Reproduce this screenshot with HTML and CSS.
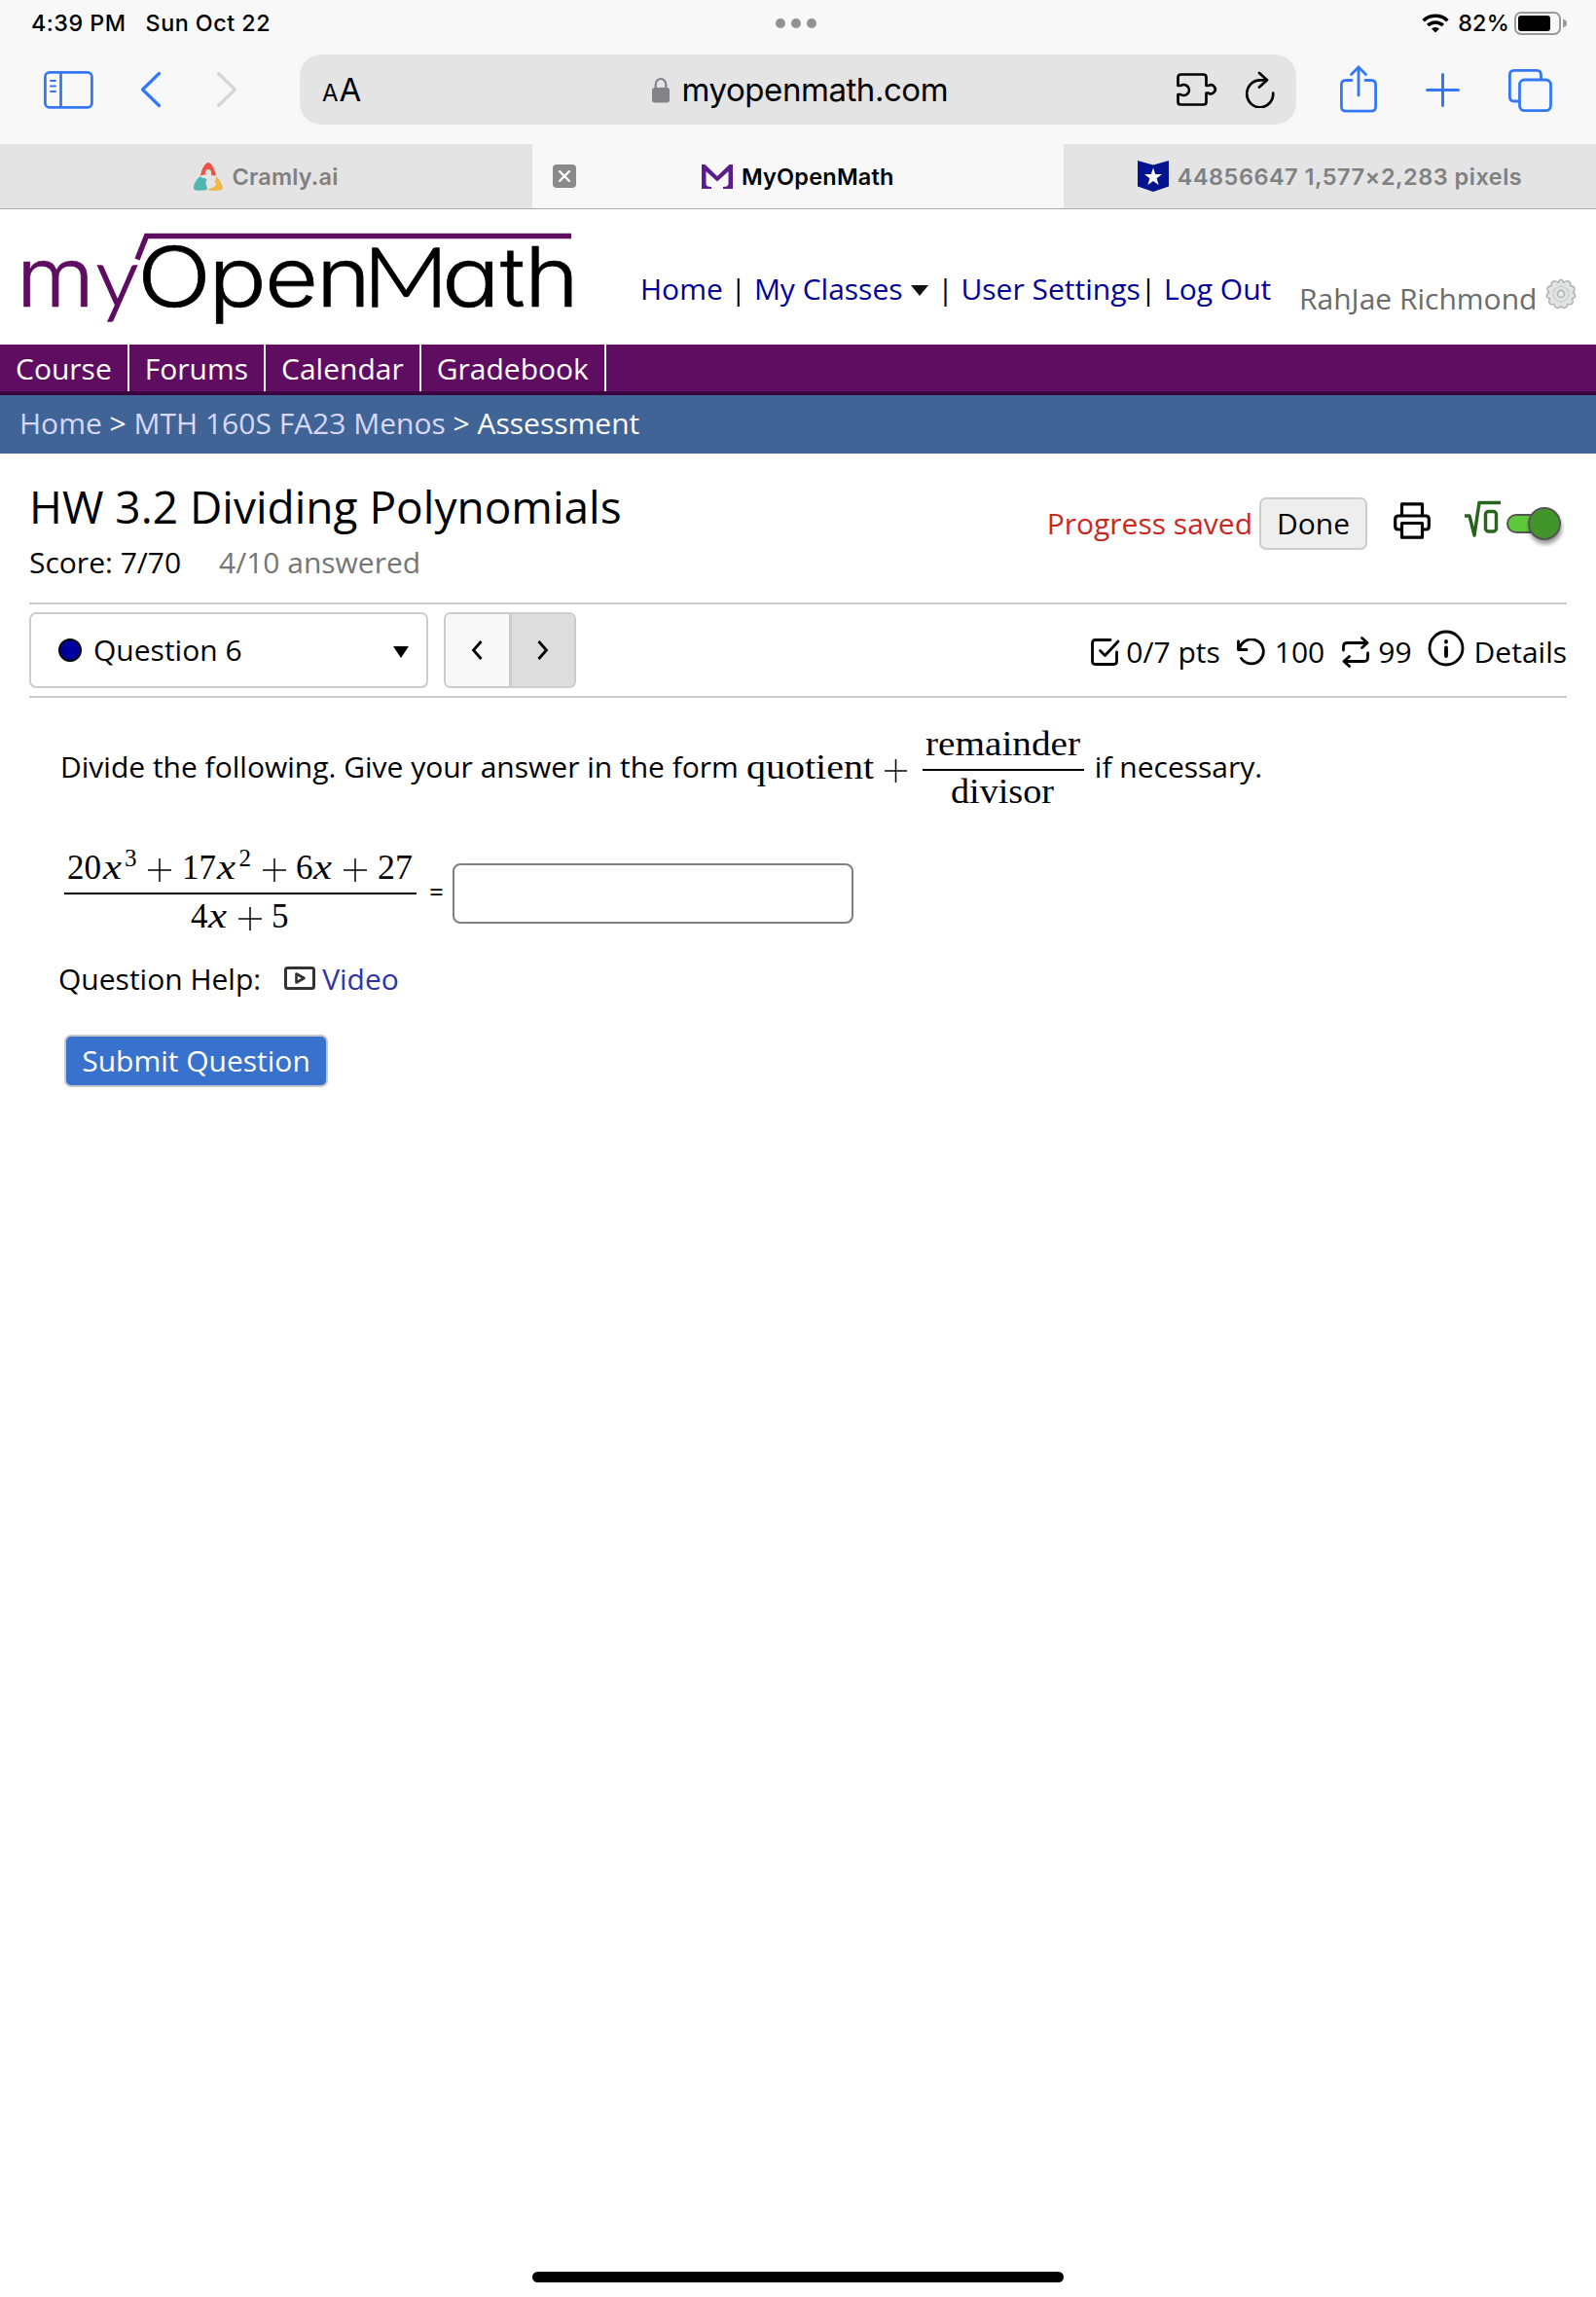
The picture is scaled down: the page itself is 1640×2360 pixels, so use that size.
FILE: index.html
```html
<!DOCTYPE html>
<html lang="en">
<head>
    <meta charset="UTF-8">
    <meta name="viewport" content="width=device-width, initial-scale=1.0">
    <title>MyOpenMath</title>
    <link rel="stylesheet" href="styles.css">
</head>
<body>
    <div class="browser">
        <div class="status-bar">
            <span class="time">4:39 PM</span>
            <span class="date">Sun Oct 22</span>
            <div class="dots"><i></i><i></i><i></i></div>
            <svg class="wifi" width="28" height="20" viewBox="0 0 28 20">
                <path d="M1.6 7.2a18 18 0 0 1 24.8 0M6.2 12a11.5 11.5 0 0 1 15.6 0" fill="none" stroke="#000" stroke-width="3.6"/>
                <path d="M14 19.6l-4-4a6 6 0 0 1 8 0z"/>
            </svg>
            <span class="percent">82%</span>
            <svg class="battery" width="54" height="24" viewBox="0 0 54 24">
                <rect x="1" y="1" width="46" height="22" rx="6" fill="none" stroke="#9a9a9a" stroke-width="2"/>
                <rect x="4" y="4" width="33" height="16" rx="3"/>
                <path d="M50 8a4 4 0 0 1 0 8z" fill="#9a9a9a"/>
            </svg>
        </div>

        <div class="toolbar">
            <svg class="sidebar-icon" width="51" height="39" viewBox="0 0 51 39">
                <g fill="none" stroke="#3478f6" stroke-width="2.8">
                    <rect x="1.4" y="1.4" width="48" height="36" rx="4.5"/>
                    <path d="M17.5 1v37"/>
                    <path d="M7 10h5M7 15.5h5M7 21h5" stroke-width="2" stroke-linecap="round"/>
                </g>
            </svg>
            <svg class="back" width="22" height="38" viewBox="0 0 22 38">
                <path d="M19.5 2.5L2.5 19l17 16.5" fill="none" stroke="#3478f6" stroke-width="3.2" stroke-linecap="round" stroke-linejoin="round"/>
            </svg>
            <svg class="forward" width="22" height="38" viewBox="0 0 22 38">
                <path d="M2.5 2.5L19.5 19l-17 16.5" fill="none" stroke="#d6d6d6" stroke-width="3.2" stroke-linecap="round" stroke-linejoin="round"/>
            </svg>
            <div class="url-bar">
                <span class="reader"><small>A</small>A</span>
                <svg class="lock" width="18" height="27" viewBox="0 0 18 27">
                    <path d="M3.7 12V8a5.3 6 0 0 1 10.6 0v4" fill="none" stroke="#828287" stroke-width="2.2"/>
                    <rect y="11" width="18" height="15.5" rx="3" fill="#828287"/>
                </svg>
                <span class="url">myopenmath.com</span>
                <svg class="puzzle" width="42" height="34" viewBox="0 0 42 34">
                    <path d="M1.5 12V4.5q0-3 3-3h23q3 0 3 3V13h2.200a4.5 4.5 0 1 1 0 7.500h-2.200V30q0 2.500-3 2.500h-23q-3 0-3-2.500v-8h2.700a5.5 5.5 0 1 0 0-9H1.500z" fill="none" stroke="#000" stroke-width="2.7" stroke-linejoin="round"/>
                </svg>
                <svg class="reload" width="31" height="38" viewBox="0 0 31 38">
                    <path d="M23 9.300H16A13.500 14 0 1 0 29.200 22.500M15 2l8 7.300-8 7.200" fill="none" stroke="#000" stroke-width="2.7" stroke-linecap="round" stroke-linejoin="round"/>
                </svg>
            </div>
            <svg class="share" width="38" height="49" viewBox="0 0 38 49">
                <path d="M12 15.5H6q-4.600 0-4.600 4.600v22.500q0 4.600 4.600 4.600h26q4.600 0 4.600-4.600V20.100q0-4.600-4.600-4.600h-6M19 31V2.500M11.500 9.500l7.500-7.500 7.500 7.500" fill="none" stroke="#3478f6" stroke-width="2.8" stroke-linecap="round"/>
            </svg>
            <svg class="plus" width="35" height="35" viewBox="0 0 35 35">
                <path d="M17.5 1.5v32M1.5 17.5h32" fill="none" stroke="#3478f6" stroke-width="3" stroke-linecap="round"/>
            </svg>
            <svg class="tabs-icon" width="45" height="44" viewBox="0 0 45 44">
                <g fill="none" stroke="#3478f6" stroke-width="2.8">
                    <rect x="11.5" y="11" width="32" height="31.6" rx="5"/>
                    <path d="M33.5 11V6q0-4.600-4.600-4.600H6q-4.600 0-4.600 4.600v22.500q0 4.500 4.600 4.500h5.500"/>
                </g>
            </svg>
        </div>

        <div class="tabs">
            <div class="tab">
                <svg width="30" height="29" viewBox="0 0 30 29">
                    <path d="M7 13.500C8 7 12 0 15 0s6.500 6 8 13.500l-5-.5c1-4-1-6-3-6s-4 2-2.500 5z" fill="#ec5447"/>
                    <path d="M7 14c2 3 4 1 6 3 1 2-1 3-.5 5s2 4 1 6C6 29.500 0 29 0 26c0-4 3-9 7-12z" fill="#50b5b1"/>
                    <path d="M23 14c4 4 7 9 7 12 0 3-8 3.500-15 2.500 0-2 3-2 5-3 4-2 4-5 1-6 2-1 2-4 2-5.500z" fill="#f0b849"/>
                </svg>
                <span class="cramly">Cramly.ai</span>
            </div>
            <div class="tab active">
                <svg class="close" width="24" height="24" viewBox="0 0 24 24">
                    <rect width="24" height="24" rx="4" fill="#8a8a8a"/>
                    <path d="M7 7l10 10M17 7L7 17" stroke="#fff" stroke-width="2.4" stroke-linecap="round"/>
                </svg>
                <svg width="32" height="25" viewBox="0 0 32 25">
                    <path d="M0 0h3.500L16 12 28.500 0H32v25H22v-2q5.500 0 5.500-3V7L16 17.500 4.500 7v13q0 3 5.500 3v2H0z" fill="#5b1d8c"/>
                </svg>
                <span class="mom">MyOpenMath</span>
            </div>
            <div class="tab">
                <svg width="32" height="32" viewBox="0 0 32 32">
                    <path d="M0 0l16 4.500L32 0v26.500L16 32 0 26.500z" fill="#04148f"/>
                    <path d="M16 7.500l2.200 6.500h6.800l-5.400 4.200 2 6.800-5.600-4.100-5.600 4.100 2-6.800L7 14h6.800z" fill="#fff"/>
                </svg>
                <span class="pixels">44856647 1,577×2,283 pixels</span>
            </div>
        </div>
    </div>

    <header class="header">
        <svg class="logo" width="583" height="110" viewBox="-13 0 583 110">
            <path d="M118 36.500L127.500 12.500H564" fill="none" stroke="#5e0d61" stroke-width="5.500"/>
            <g class="logo-text">
                <g class="my">
                    <text x="-6" y="85" textLength="80" lengthAdjust="spacingAndGlyphs">m</text>
                    <text class="lato" x="76" y="85" textLength="43" lengthAdjust="spacingAndGlyphs">y</text>
                </g>
                <text x="118" y="85" textLength="76" lengthAdjust="spacingAndGlyphs">O</text>
                <text x="191" y="85" textLength="60" lengthAdjust="spacingAndGlyphs">p</text>
                <text x="249" y="85" textLength="55" lengthAdjust="spacingAndGlyphs">e</text>
                <text x="302" y="85" textLength="56" lengthAdjust="spacingAndGlyphs">n</text>
                <text class="lato" x="350" y="85" textLength="88" lengthAdjust="spacingAndGlyphs">M</text>
                <text x="431" y="85" textLength="60" lengthAdjust="spacingAndGlyphs">a</text>
                <text x="491" y="85">t</text>
                <text x="516" y="85" textLength="56" lengthAdjust="spacingAndGlyphs">h</text>
            </g>
        </svg>
        <nav class="links">
            <a>Home</a> | <a>My Classes</a> <i class="caret"></i> | <a>User Settings</a>| <a>Log Out</a>
        </nav>
        <span class="user">RahJae Richmond</span>
        <svg class="gear" width="32" height="32" viewBox="0 0 32 32">
            <path d="M16 1.500q2 0 2.800 2.800 3-2.300 5.200-1.300t1.700 4.600q3.600.2 4.200 2.500t-1.700 4.400q2.600 1.500 2.500 3.500t-3.300 2.800q1.500 3.200.2 4.900t-4.700.8q-.8 3.200-3 3.800T16 28.500q-2 2.400-4.200 1.800t-2.700-3.800q-3.600.8-4.800-.8t.2-4.900Q1.300 20 1.300 18t2.500-3.500Q1.500 12.300 2.100 10.100t4.200-2.500Q5.800 4 8 3t5.200 1.300Q14 1.500 16 1.500z" fill="#e2e4e4" stroke="#b3b5b5" stroke-width="1.6" stroke-linejoin="round"/>
            <circle cx="16" cy="16" r="8" fill="none" stroke="#d2d4d4" stroke-width="2"/>
            <circle cx="16" cy="16" r="3.5" fill="#eee" stroke="#b5b7b7" stroke-width="1.8"/>
        </svg>
    </header>

    <nav class="course-nav">
        <a>Course</a><a>Forums</a><a>Calendar</a><a>Gradebook</a>
    </nav>
    <div class="breadcrumb"><a>Home</a> &gt; <a>MTH 160S FA23 Menos</a> &gt; Assessment</div>

    <main>
        <div class="title-row">
            <div class="title-block">
                <h1>HW 3.2 Dividing Polynomials</h1>
                <p><span class="score">Score: 7/70</span><span class="answered">4/10 answered</span></p>
            </div>
            <div class="actions">
                <span class="saved">Progress saved</span>
                <button class="done">Done</button>
                <svg class="printer" width="38" height="38" viewBox="0 0 38 38">
                    <g fill="none" stroke="#000" stroke-width="3.2" stroke-linejoin="round">
                        <path d="M8.500 14V1.800h21V14M8.500 28H5q-3.300 0-3.300-3.300v-7.400Q1.700 14 5 14h28q3.300 0 3.300 3.300v7.400Q36.300 28 33 28h-3.500"/>
                        <path d="M8.500 21.500h21v14.700h-21z"/>
                    </g>
                </svg>
                <svg class="equation" width="104" height="48" viewBox="0 0 104 48">
                    <path d="M1 16h5l5 20 5-33.500H38" fill="none" stroke="#26651a" stroke-width="3.4" stroke-linejoin="round"/>
                    <rect x="22.5" y="11.5" width="11" height="20.5" rx="3" fill="none" stroke="#26651a" stroke-width="3.4"/>
                    <rect x="45" y="15" width="50" height="18" rx="9" fill="#5ec93c" stroke="#555" stroke-width="2"/>
                    <circle class="knob" cx="83" cy="24" r="16" fill="#41952a" stroke="#555" stroke-width="2"/>
                </svg>
            </div>
        </div>

        <div class="question-bar">
            <div class="select">
                <svg width="24" height="24" viewBox="0 0 24 24"><circle cx="12" cy="12" r="11" fill="#0000a0" stroke="#000" stroke-width="2"/></svg>
                <span>Question 6</span>
                <svg class="arrow" width="16" height="12" viewBox="0 0 16 12"><path d="M0 0h16L8 12z"/></svg>
            </div>
            <div class="pager">
                <button><svg width="14" height="20" viewBox="0 0 14 20"><path d="M11.500 1L3.500 10l8 9"/></svg></button>
                <button class="next"><svg width="14" height="20" viewBox="0 0 14 20"><path d="M2.500 1l8 9-8 9"/></svg></button>
            </div>
            <div class="details">
                <svg class="i-check" width="30" height="28" viewBox="0 0 30 28"><path d="M20 1.500H4.500q-3 0-3 3v19q0 3 3 3h19q3 0 3-3V14M9.500 12.500l5 5L28 3"/></svg>
                <span class="pts">0/7 pts</span>
                <svg class="i-undo" width="30" height="28" viewBox="0 0 30 28"><path d="M1.500 3v8.500H10M2.500 11A12.500 12.500 0 1 1 4.500 20.500"/></svg>
                <span class="tries">100</span>
                <svg class="i-swap" width="28" height="32" viewBox="0 0 28 32"><path d="M1.500 14V10.500q0-4 4-4H26M20.500 1.500l5.500 5-5.500 5M26.500 17v4.500q0 4-4 4H2M7.500 20.500l-5.500 5 5.500 5"/></svg>
                <span class="regens">99</span>
                <svg class="i-info" width="38" height="38" viewBox="0 0 38 38"><circle cx="19" cy="19" r="17"/><path d="M19 18.500v8.500M19 12v.5" stroke-width="3.8"/></svg>
                <span>Details</span>
            </div>
        </div>

        <div class="question">
            <div class="prompt">
                <span>Divide the following. Give your answer in the form</span>
                <svg class="math" width="356" height="100" viewBox="0 0 356 100">
                    <text x="0" y="60" textLength="131" lengthAdjust="spacingAndGlyphs">quotient</text>
                    <path d="M142 52h23M153.500 40v24" stroke="#000" stroke-width="1.5"/>
                    <text x="184" y="36" textLength="159" lengthAdjust="spacingAndGlyphs">remainder</text>
                    <path d="M181 51h166" stroke="#000" stroke-width="2"/>
                    <text x="210" y="85" textLength="106" lengthAdjust="spacingAndGlyphs">divisor</text>
                </svg>
                <span class="tail">if necessary.</span>
            </div>
            <div class="answer">
                <svg class="math" width="364" height="100" viewBox="0 0 364 100">
                    <text x="3" y="43" textLength="35" lengthAdjust="spacingAndGlyphs">20</text>
                    <text class="var" x="40" y="43" textLength="19" lengthAdjust="spacingAndGlyphs">x</text>
                    <text class="sup" x="62" y="30">3</text>
                    <path d="M86 34h24M98 22v24" stroke="#000" stroke-width="1.5"/>
                    <text x="121" y="43" textLength="35" lengthAdjust="spacingAndGlyphs">17</text>
                    <text class="var" x="157" y="43" textLength="19" lengthAdjust="spacingAndGlyphs">x</text>
                    <text class="sup" x="179.5" y="30">2</text>
                    <path d="M204 34h24M216 22v24" stroke="#000" stroke-width="1.5"/>
                    <text x="238" y="43">6</text>
                    <text class="var" x="256" y="43" textLength="19" lengthAdjust="spacingAndGlyphs">x</text>
                    <path d="M287 34h24M299 22v24" stroke="#000" stroke-width="1.5"/>
                    <text x="322" y="43" textLength="36" lengthAdjust="spacingAndGlyphs">27</text>
                    <path d="M0 58h362" stroke="#000" stroke-width="2"/>
                    <text x="130" y="93">4</text>
                    <text class="var" x="148" y="93" textLength="19" lengthAdjust="spacingAndGlyphs">x</text>
                    <path d="M179 84h24M191 72v24" stroke="#000" stroke-width="1.5"/>
                    <text x="213" y="93">5</text>
                </svg>
                <span class="equals">=</span>
                <input type="text" class="answer-box">
            </div>
            <div class="help">
                <span>Question Help:</span>
                <svg width="32" height="24" viewBox="0 0 32 24">
                    <rect x="1.5" y="1.5" width="29" height="21" rx="2" fill="none" stroke="#333" stroke-width="3"/>
                    <path d="M12.500 7.500v9l8-4.500z" fill="none" stroke="#333" stroke-width="2.6" stroke-linejoin="round"/>
                </svg>
                <a>Video</a>
            </div>
            <button class="submit">Submit Question</button>
        </div>
    </main>
    <div class="home-indicator"></div>
</body>
</html>
```
FILE: styles.css
```css
* {
    box-sizing: border-box;
}

body {
    display: flex;
    flex-direction: column;
    height: 2360px;
    margin: 0;
    background-color: #fff;
    font-family: 'Open Sans', 'Noto Sans', sans-serif;
    font-size: 30px;
    color: #000;
    overflow: hidden;
}

svg {
    display: block;
    flex: none;
}

span,
a,
nav {
    white-space: nowrap;
}

button {
    font: inherit;
    padding: 0;
}

/* browser chrome */
.browser {
    background-color: #f8f8f8;
    border-bottom: 1px solid #acacac;
    font-family: Inter, 'Liberation Sans', sans-serif;
}

.status-bar {
    display: flex;
    align-items: center;
    height: 48px;
    padding: 0 30px 0 32px;
    font-size: 23.3px;
    font-weight: 500;
    letter-spacing: 0.5px;
}

.status-bar span {
    padding-bottom: 1px;
}

.time {
    width: 118px;
}

.date {
    width: 650px;
}

.dots {
    display: flex;
    gap: 6px;
    margin-right: 622px;
}

.dots i {
    width: 10px;
    height: 10px;
    border-radius: 50%;
    background-color: #929292;
}

.percent {
    width: 58px;
    margin-left: 9px;
    letter-spacing: 0.2px;
}

.toolbar {
    display: flex;
    align-items: center;
    height: 100px;
    padding: 0 45px 12px;
}

.sidebar-icon {
    margin-right: 48px;
}

.back {
    margin-right: 56px;
}

.forward {
    margin-right: 64px;
}

.url-bar {
    display: flex;
    align-items: center;
    width: 1024px;
    height: 72px;
    padding: 0 22px 0 23px;
    border-radius: 22px;
    background-color: #e4e4e4;
    font-size: 33px;
}

.reader {
    width: 339px;
    font-size: 33px;
}

.reader small {
    margin-right: 1px;
    font-size: 24px;
}

.lock {
    margin-right: 13px;
}

.url {
    width: 509px;
    letter-spacing: -0.45px;
}

.puzzle {
    margin-right: 28px;
}

.share {
    margin: -2px 0 0 45px;
}

.plus {
    margin: 1px 50px 0;
}

.tabs-icon {
    margin-top: 1px;
}

.tabs {
    display: grid;
    grid-template-columns: 547px 546px 547px;
    height: 66px;
    font-size: 23.5px;
    font-weight: 600;
    color: #808080;
}

.tab {
    display: flex;
    align-items: center;
    justify-content: center;
    gap: 9px;
    background-color: #e4e4e4;
}

.tab.active {
    justify-content: flex-start;
    padding-left: 21px;
    background-color: #f8f8f8;
    color: #000;
}

.close {
    margin-right: 120px;
}

.cramly {
    letter-spacing: 0.2px;
}

.mom {
    letter-spacing: 0.2px;
}

.pixels {
    letter-spacing: 0.5px;
}

/* page header */
.header {
    display: flex;
    height: 139px;
    padding: 15px 20px 0 10px;
}

.logo-text {
    stroke: #000;
    stroke-width: 0.7;
    font-family: Inter, sans-serif;
    font-size: 85px;
    font-weight: 300;
    font-feature-settings: 'cv11';
}

.my {
    fill: #5e0d61;
    stroke: #5e0d61;
}

.lato {
    stroke-width: 1.6;
    font-family: Lato, sans-serif;
    font-weight: 300;
}

.links {
    width: 677px;
    margin-left: 65px;
    padding-top: 47px;
    line-height: 40px;
}

.links a {
    color: #000099;
}

.caret {
    display: inline-block;
    margin: 0 1px 4px 1px;
    border: 9px solid transparent;
    border-top: 11px solid #111;
    border-bottom: 0;
}

.user {
    width: 253px;
    padding-top: 57px;
    line-height: 40px;
    color: #6b6b6b;
}

.gear {
    margin-top: 56px;
}

.course-nav {
    display: flex;
    height: 52px;
    border-bottom: 4px solid #3d0340;
    background-color: #5e0d61;
    line-height: 50px;
}

.course-nav a {
    height: 48px;
    padding: 0 16px;
    border-right: 2px solid #fff;
    color: #fff;
}

.breadcrumb {
    height: 60px;
    padding-left: 20px;
    background-color: #406495;
    line-height: 58px;
    color: #fff;
}

.breadcrumb a {
    color: #d8d8ff;
}

/* assessment */
main {
    flex: 1;
    padding: 0 30px;
}

.title-row {
    display: flex;
    justify-content: space-between;
    height: 153px;
}

h1 {
    margin: 22px 0 0;
    font-size: 46px;
    font-weight: 400;
    line-height: 64px;
}

.title-block p {
    margin: 5px 0 0;
    line-height: 41px;
}

.score {
    display: inline-block;
    width: 195px;
}

.answered {
    color: #757575;
}

.actions {
    display: flex;
    align-items: center;
    height: 54px;
    margin: 45px 2px 0 0;
}

.saved {
    margin-right: 7px;
    padding-bottom: 2px;
    color: #c9281e;
}

.done {
    width: 111px;
    height: 54px;
    margin-right: 27px;
    padding-bottom: 2px;
    border: 2px solid #ccc;
    border-radius: 7px;
    background-color: #eee;
    color: #000;
}

.printer {
    margin: 0 34px 7px 0;
}

.knob {
    filter: drop-shadow(1px 4px 2px rgba(0, 0, 0, 0.4));
}

.question-bar {
    display: flex;
    align-items: center;
    height: 98px;
    border-top: 2px solid #ccc;
    border-bottom: 2px solid #ccc;
}

.select {
    display: flex;
    align-items: center;
    width: 410px;
    height: 78px;
    padding: 0 18px 0 28px;
    border: 2px solid #ccc;
    border-radius: 7px;
}

.select span {
    margin-left: 12px;
    padding-bottom: 2px;
}

.arrow {
    margin: 4px 0 0 auto;
}

.pager {
    display: flex;
    width: 136px;
    height: 78px;
    margin-left: 16px;
    border: 2px solid #ccc;
    border-radius: 7px;
    overflow: hidden;
}

.pager button {
    display: flex;
    align-items: center;
    justify-content: center;
    flex: 1;
    border: 0;
    background-color: #f8f8f8;
}

.pager .next {
    border-left: 3px solid #ccc;
    background-color: #ddd;
}

.pager path {
    fill: none;
    stroke: #000;
    stroke-width: 2.8;
}

.details {
    display: flex;
    align-items: center;
    margin-left: auto;
    padding-top: 3px;
}

.details svg {
    fill: none;
    stroke: #000;
    stroke-width: 2.8;
    stroke-linecap: round;
    stroke-linejoin: round;
}

.i-check {
    margin-right: 6px;
}

.pts {
    margin-right: 17px;
}

.i-undo {
    margin-right: 9px;
}

.tries {
    margin-right: 18px;
}

.i-swap {
    margin-right: 9px;
}

.regens {
    margin-right: 16px;
}

.i-info {
    margin: 0 10px 7px 0;
}

.question {
    padding: 23px 0 0 30px;
}

.prompt {
    display: flex;
    align-items: center;
    height: 100px;
}

.prompt span {
    padding: 0 0 5px 2px;
}

.math {
    font-family: 'Liberation Serif', serif;
    font-size: 35px;
}

.prompt .math {
    margin-left: 8px;
}

.var {
    font-style: italic;
}

.sup {
    font-size: 25px;
}

.answer {
    display: flex;
    align-items: center;
    height: 100px;
    margin: 20px 0 0 6px;
}

.equals {
    margin: 12px 0 0 11px;
    font-size: 26px;
    line-height: 30px;
}

.answer-box {
    width: 412px;
    height: 62px;
    margin: 15px 0 0 9px;
    border: 2px solid #808080;
    border-radius: 8px;
}

.help {
    display: flex;
    align-items: center;
    height: 42px;
    margin-top: 24px;
}

.help svg {
    margin: 0 7px 0 24px;
}

.help a {
    color: #3232a8;
}

.submit {
    width: 271px;
    height: 54px;
    margin: 37px 0 0 6px;
    padding-bottom: 2px;
    border: 2px solid #c8c8c8;
    border-radius: 7px;
    background-color: #3872cd;
    color: #fff;
}

.home-indicator {
    flex: none;
    width: 546px;
    height: 11px;
    margin: 0 auto 15px;
    border-radius: 6px;
    background-color: #000;
}
```
